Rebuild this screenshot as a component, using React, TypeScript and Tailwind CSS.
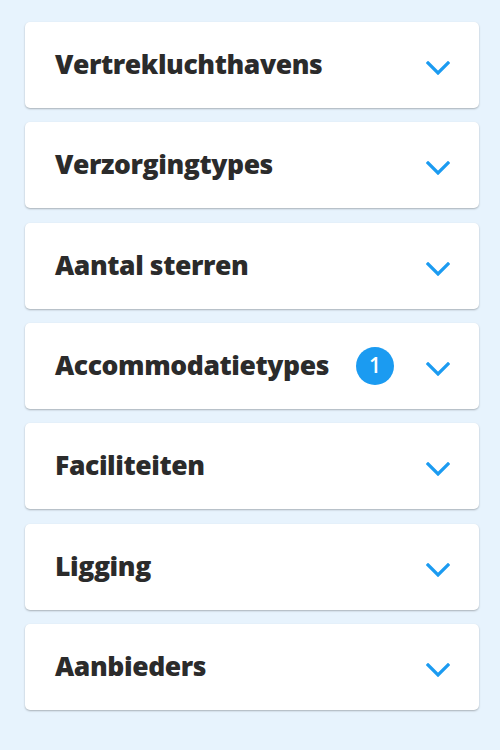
import React from "react";

type Filter = { label: string; count?: number };

const filters: Filter[] = [
  { label: "Vertrekluchthavens" },
  { label: "Verzorgingtypes" },
  { label: "Aantal sterren" },
  { label: "Accommodatietypes", count: 1 },
  { label: "Faciliteiten" },
  { label: "Ligging" },
  { label: "Aanbieders" },
];

function Chevron() {
  return (
    <svg width="24" height="14" viewBox="0 0 24 14" fill="none" className="shrink-0">
      <path d="M2 2l10 10L22 2" stroke="#1b9bf1" strokeWidth="3.2" strokeLinecap="square" />
    </svg>
  );
}

export default function App() {
  return (
    <div className="min-h-[750px] w-[500px] bg-[#e7f3fd] px-[25px] pt-[22px] font-['Open_Sans',sans-serif]">
      <div className="flex flex-col gap-[14.33px]">
        {filters.map((f) => (
          <button
            key={f.label}
            className="flex h-[86px] w-[454px] items-center rounded-[5px] bg-white pl-[30px] pr-[29px] text-left shadow-[0_1px_2px_rgba(0,0,0,0.28)]"
          >
            <span className="flex-1 text-[26.5px] font-extrabold tracking-[-0.4px] text-[#2b2b2b]">{f.label}</span>
            {f.count !== undefined && (
              <span className="mr-[32px] flex h-[38px] w-[38px] items-center justify-center rounded-full bg-[#1b9bf1] text-[21px] font-semibold text-white">
                {f.count}
              </span>
            )}
            <span className="pt-[6px]">
              <Chevron />
            </span>
          </button>
        ))}
      </div>
    </div>
  );
}
